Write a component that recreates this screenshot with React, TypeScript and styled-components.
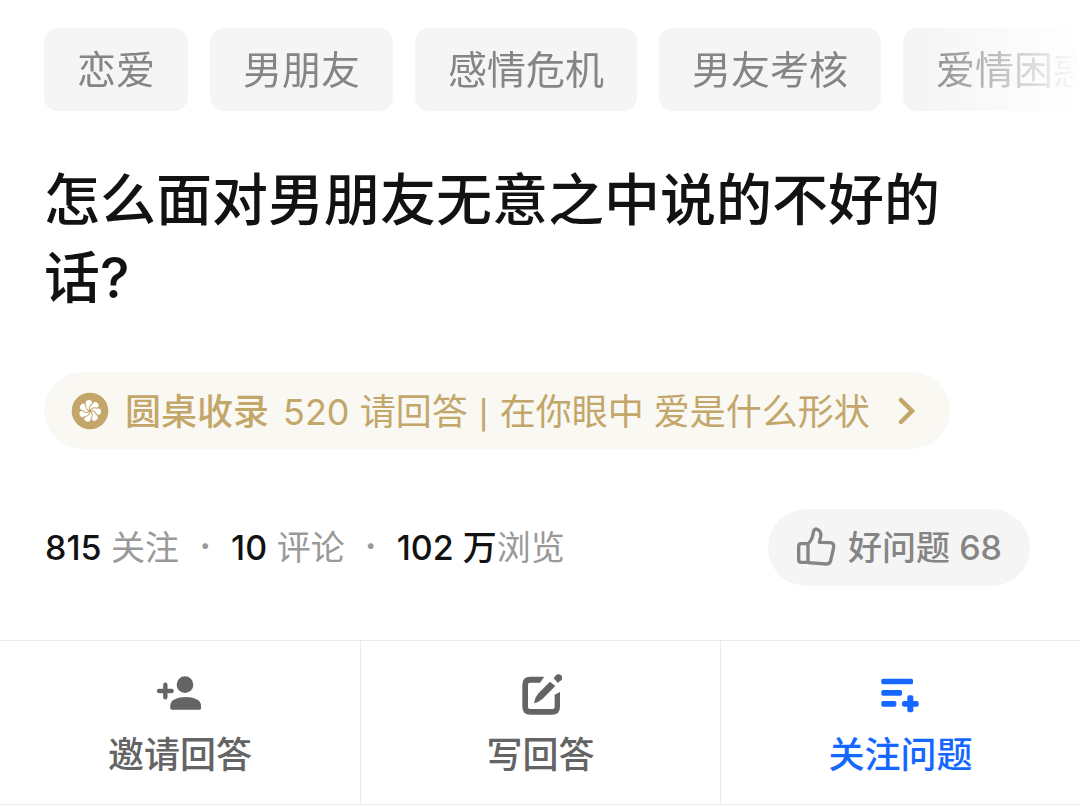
import React from "react";
import styled, { createGlobalStyle } from "styled-components";

const GlobalStyle = createGlobalStyle`
  *, *::before, *::after { box-sizing: border-box; }
  body {
    margin: 0;
    background: #fff;
    color: #121212;
    font-family: Inter, "Noto Sans CJK SC", sans-serif;
  }
  a { color: inherit; text-decoration: none; }
  button { border: 0; margin: 0; font: inherit; cursor: pointer; }
`;

const Page = styled.main`
  display: flex;
  flex-direction: column;
  overflow: hidden;
`;

const Tags = styled.nav`
  display: flex;
  gap: 22px;
  padding: 28px 0 0 44px;
  overflow: hidden;
  mask-image: linear-gradient(to right, #000 calc(100% - 160px), transparent);
`;

const Tag = styled.a`
  flex: none;
  padding: 0 33px;
  border-radius: 14px;
  background: #f5f5f5;
  color: #858585;
  font-size: 39px;
  line-height: 83px;
  font-weight: 400;
`;

const Title = styled.h1`
  max-width: 17em;
  margin: 50px 44px 0;
  font-size: 56px;
  line-height: 78px;
  font-weight: 500;
`;

const Roundtable = styled.a`
  display: flex;
  align-items: center;
  align-self: flex-start;
  height: 77px;
  margin: 55px 44px 0;
  padding: 0 34px 0 27px;
  border-radius: 39px;
  background: #f9f8f3;
  color: #c3a669;
  font-size: 36px;
  white-space: nowrap;

  svg { flex: none; }
`;

const Source = styled.strong`
  margin: 0 14px 0 16px;
  padding-bottom: 4px;
  font-weight: 500;
`;

const Topic = styled.span`
  margin-right: 28px;
  padding-bottom: 4px;
`;

const Separator = styled.span`
  margin: 0 1px;
  font-size: 28px;
  font-weight: 500;
`;

const Meta = styled.div`
  display: flex;
  align-items: center;
  justify-content: space-between;
  margin-top: 60px;
  padding: 0 50px 0 45px;
`;

const Stats = styled.p`
  display: flex;
  align-items: center;
  margin: 0;
  padding-bottom: 4px;
  color: #999;
  font-size: 34px;
  white-space: pre;

  b { color: #121212; font-weight: 500; }
`;

const Dot = styled.span`
  width: 52px;
  font-weight: 700;
  text-align: center;
`;

const GoodButton = styled.button`
  display: flex;
  align-items: center;
  gap: 10px;
  height: 77px;
  padding: 0 28px;
  border-radius: 39px;
  background: #f5f5f5;
  color: #858585;
  && { font-size: 34px; font-weight: 500; }

  span { padding-bottom: 4px; }
`;

const Actions = styled.div`
  display: grid;
  grid-template-columns: repeat(3, 1fr);
  margin-top: 54px;
  border-top: 1px solid #ebebeb;
  border-bottom: 1px solid #ebebeb;
`;

const Action = styled.button<{ $primary?: boolean }>`
  display: flex;
  flex-direction: column;
  align-items: center;
  gap: 13px;
  padding: 32px 0 22px;
  background: #fff;
  color: ${(p) => (p.$primary ? "#1467ff" : "#646464")};
  && { font-size: 36px; line-height: 54px; font-weight: 500; }

  & + & { border-left: 1px solid #ebebeb; }
`;

const petals = [0, 1, 2, 3, 4, 5, 6].map((n) => (n * 360) / 7 - 8);

const FlowerIcon = () => (
  <svg width="38" height="38" viewBox="-57 -57 114 114" aria-hidden="true">
    <circle r="55" fill="#c3a669" />
    <circle r="18" fill="#fff" />
    {petals.map((angle) => (
      <circle key={angle} cy="-23" r="10" fill="#fff" transform={`rotate(${angle})`} />
    ))}
    {petals.map((angle) => (
      <path
        key={angle}
        d="M0 0Q-10 -10 -1 -22L1 -36"
        fill="none"
        stroke="#c3a669"
        strokeWidth="3"
        transform={`rotate(${angle + 26})`}
      />
    ))}
  </svg>
);

const ChevronIcon = () => (
  <svg width="18" height="28" viewBox="0 0 18 28" fill="none" aria-hidden="true">
    <path d="M3 3L14 14L3 25" stroke="#c3a669" strokeWidth="4.5" strokeLinecap="round" />
  </svg>
);

const ThumbIcon = () => (
  <svg width="42" height="42" viewBox="0 0 126 126" fill="none" stroke="currentColor" strokeWidth="10" strokeLinejoin="round" aria-hidden="true">
    <path d="M36 50H16Q8 50 8 58V98Q8 106 16 106H36Z" />
    <path d="M36 50Q48 40 51 22C52 12 54 6 60 6C71 8 76 17 74 28L70 46L102 47Q115 48 113 61L104 101Q101 111 91 111L36 107" />
  </svg>
);

const InviteIcon = () => (
  <svg width="48" height="42" viewBox="0 0 144 126" fill="currentColor" aria-hidden="true">
    <circle cx="87" cy="35" r="25" />
    <path d="M43 97C43 81 65 72 89 72C113 72 135 81 135 97V106Q135 110 131 110H47Q43 110 43 106Z" />
    <path d="M28 35V73M9 54H47" stroke="currentColor" strokeWidth="13" strokeLinecap="round" />
  </svg>
);

const WriteIcon = () => (
  <svg width="42" height="42" viewBox="0 0 126 126" fill="currentColor" aria-hidden="true">
    <path d="M73 11H31Q7 11 7 35V101Q7 125 31 125H96Q120 125 120 101V57L104 65V102Q104 108 98 108H30Q24 108 24 102V35Q24 29 30 29H60Z" />
    <path d="M90 26L106 39L68 77Q57 87 42 91Q44 74 54 62Z" />
    <path d="M101 16L106 9A11 11 0 1 1 119 25L114 30Z" />
  </svg>
);

const FollowIcon = () => (
  <svg width="42" height="42" viewBox="0 0 126 126" fill="currentColor" aria-hidden="true">
    <rect x="4" y="17" width="95" height="17" rx="5" />
    <rect x="4" y="51" width="62" height="17" rx="5" />
    <rect x="4" y="84" width="45" height="17" rx="5" />
    <rect x="66" y="84" width="50" height="17" rx="6" />
    <rect x="82" y="67" width="18" height="51" rx="6" />
  </svg>
);

const tags = ["恋爱", "男朋友", "感情危机", "男友考核", "爱情困惑"];

export default function App() {
  return (
    <>
      <GlobalStyle />
      <Page lang="zh-CN">
        <Tags>
          {tags.map((tag) => (
            <Tag href="#" key={tag}>{tag}</Tag>
          ))}
        </Tags>
        <Title>怎么面对男朋友无意之中说的不好的话?</Title>
        <Roundtable href="#">
          <FlowerIcon />
          <Source>圆桌收录</Source>
          <Topic>520 请回答 <Separator>|</Separator> 在你眼中 爱是什么形状</Topic>
          <ChevronIcon />
        </Roundtable>
        <Meta>
          <Stats>
            <span><b>815</b> 关注</span>
            <Dot>·</Dot>
            <span><b>10</b> 评论</span>
            <Dot>·</Dot>
            <span><b>102 万</b>浏览</span>
          </Stats>
          <GoodButton type="button">
            <ThumbIcon />
            <span>好问题 68</span>
          </GoodButton>
        </Meta>
        <Actions>
          <Action type="button"><InviteIcon />邀请回答</Action>
          <Action type="button"><WriteIcon />写回答</Action>
          <Action type="button" $primary><FollowIcon />关注问题</Action>
        </Actions>
      </Page>
    </>
  );
}
